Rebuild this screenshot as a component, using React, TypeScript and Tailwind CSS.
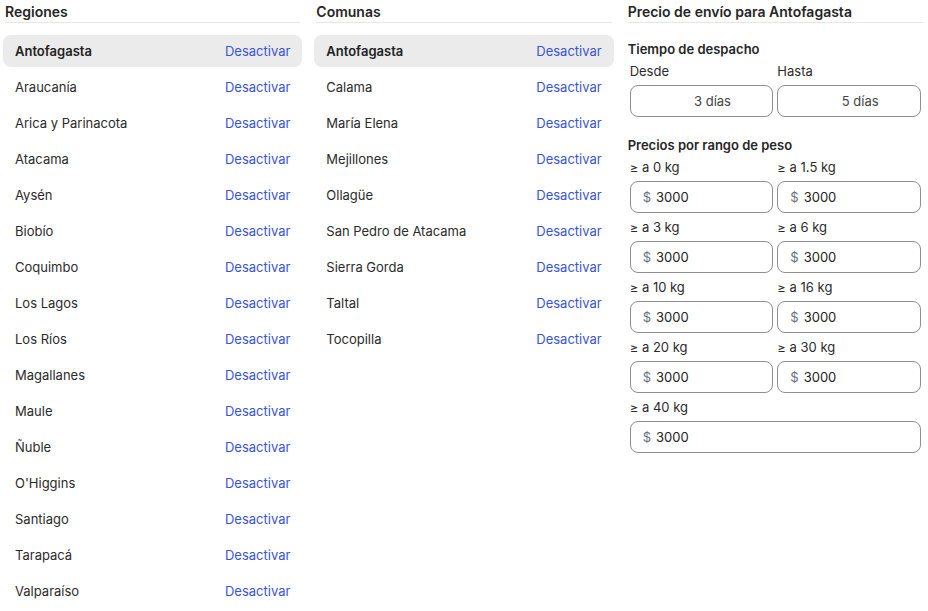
import React from 'react';

const regiones = [
  'Antofagasta',
  'Araucanía',
  'Arica y Parinacota',
  'Atacama',
  'Aysén',
  'Biobío',
  'Coquimbo',
  'Los Lagos',
  'Los Ríos',
  'Magallanes',
  'Maule',
  'Ñuble',
  "O'Higgins",
  'Santiago',
  'Tarapacá',
  'Valparaíso',
];

const comunas = [
  'Antofagasta',
  'Calama',
  'María Elena',
  'Mejillones',
  'Ollagüe',
  'San Pedro de Atacama',
  'Sierra Gorda',
  'Taltal',
  'Tocopilla',
];

const rangos = ['0', '1.5', '3', '6', '10', '16', '20', '30', '40'];

function SectionHeader({ title }: { title: string }) {
  return (
    <h2 className="mx-0.5 border-b border-[#e6e6e6] pt-[2px] text-[14px] font-semibold leading-5 text-[#262626]">
      {title}
    </h2>
  );
}

function ToggleList({ items, selected }: { items: string[]; selected: string }) {
  return (
    <ul className="mt-3 flex flex-col gap-1">
      {items.map((name) => {
        const active = name === selected;
        return (
          <li
            key={name}
            className={`flex h-8 items-center justify-between rounded-lg px-3 pt-[2px] text-[13px] ${
              active ? 'bg-[#ebebeb] font-semibold text-[#222]' : 'text-[#2b2b2b]'
            }`}
          >
            <span>{name}</span>
            <button type="button" className="font-normal text-[#3a54d6]">
              Desactivar
            </button>
          </li>
        );
      })}
    </ul>
  );
}

function PriceInput({ value }: { value: string }) {
  return (
    <div className="flex h-8 items-center gap-[5px] rounded-lg border border-[#8f8f8f] bg-white px-3 pt-[2px] text-[13px]">
      <span className="text-[#6b7280]">$</span>
      <span className="text-[#222]">{value}</span>
    </div>
  );
}

export default function App() {
  return (
    <div
      className="grid w-[928px] grid-cols-3 gap-3 bg-white px-[3px] pb-4"
      style={{ fontFamily: 'Inter, "Noto Sans", sans-serif' }}
    >
      <section>
        <SectionHeader title="Regiones" />
        <ToggleList items={regiones} selected="Antofagasta" />
      </section>

      <section>
        <SectionHeader title="Comunas" />
        <ToggleList items={comunas} selected="Antofagasta" />
      </section>

      <section>
        <SectionHeader title="Precio de envío para Antofagasta" />

        <h3 className="mx-0.5 mt-4 text-[13px] font-semibold leading-5 text-[#262626]">Tiempo de despacho</h3>
        <div className="mt-0.5 grid grid-cols-2 gap-x-1 px-1 text-[13px] text-[#2b2b2b]">
          <div>
            <label className="block leading-5">Desde</label>
            <div className="mt-1 flex h-8 items-center justify-center rounded-lg border border-[#8f8f8f] pl-[22px] pt-[2px] text-[#444]">
              3 días
            </div>
          </div>
          <div>
            <label className="block leading-5">Hasta</label>
            <div className="mt-1 flex h-8 items-center justify-center rounded-lg border border-[#8f8f8f] pl-[22px] pt-[2px] text-[#444]">
              5 días
            </div>
          </div>
        </div>

        <h3 className="mx-0.5 mt-[18px] text-[13px] font-semibold leading-5 text-[#262626]">
          Precios por rango de peso
        </h3>
        <div className="mt-0.5 grid grid-cols-2 gap-x-1 gap-y-1 px-1 text-[13px] text-[#2b2b2b]">
          {rangos.map((r, i) => (
            <div key={r} className={i === rangos.length - 1 ? 'col-span-2' : ''}>
              <label className="block leading-5">≥ a {r} kg</label>
              <div className="mt-1">
                <PriceInput value="3000" />
              </div>
            </div>
          ))}
        </div>
      </section>
    </div>
  );
}
